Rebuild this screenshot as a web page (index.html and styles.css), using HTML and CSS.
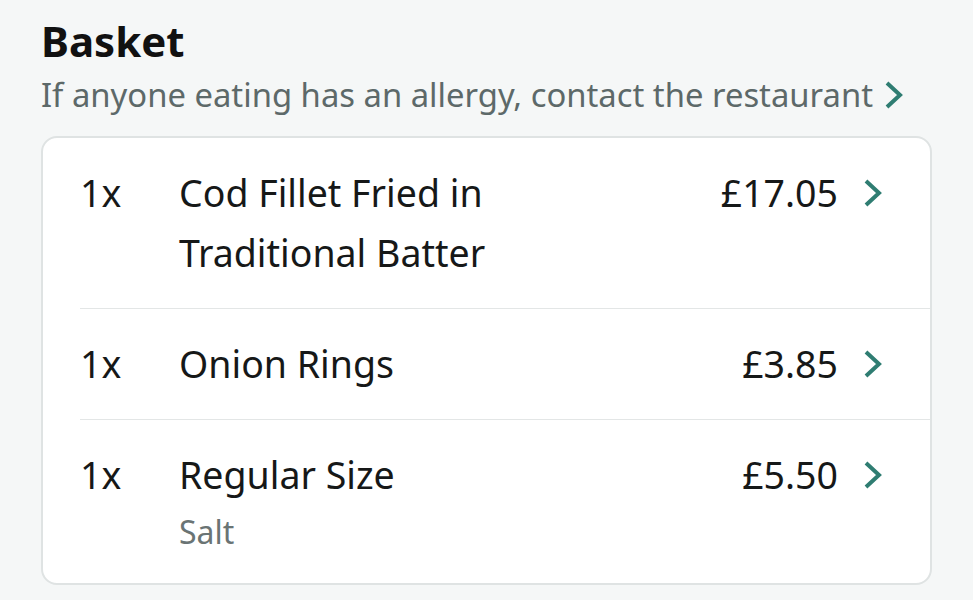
FILE: index.html
```html
<!DOCTYPE html>
<html lang="en">

<head>
    <meta charset="UTF-8" />
    <meta name="viewport" content="width=device-width, initial-scale=1" />
    <title>Basket</title>
    <link rel="stylesheet" href="styles.css">
</head>

<body>

    <div class="basket">
        <h1>Basket</h1>
        <a class="allergy" href="#">If anyone eating has an allergy, contact the restaurant
            <svg class="chev" viewBox="0 0 22 28"><path d="M4 2 L17 14 L4 26" /></svg>
        </a>

        <div class="card">
            <div class="item">
                <span class="qty">1x</span>
                <div class="name">Cod Fillet Fried in Traditional Batter</div>
                <span class="price">£17.05</span>
                <svg class="chev" viewBox="0 0 22 28"><path d="M4 2 L17 14 L4 26" /></svg>
            </div>
            <div class="item">
                <span class="qty">1x</span>
                <div class="name">Onion Rings</div>
                <span class="price">£3.85</span>
                <svg class="chev" viewBox="0 0 22 28"><path d="M4 2 L17 14 L4 26" /></svg>
            </div>
            <div class="item">
                <span class="qty">1x</span>
                <div class="name">Regular Size
                    <div class="extra">Salt</div>
                </div>
                <span class="price">£5.50</span>
                <svg class="chev" viewBox="0 0 22 28"><path d="M4 2 L17 14 L4 26" /></svg>
            </div>
        </div>
    </div>

</body>

</html>
```

FILE: styles.css
```css
body {
    font-family: "Noto Sans", sans-serif;
    background: #f5f7f7;
    margin: 0;
    padding: 0;
    color: #161818;
}

.basket {
    padding: 12px 41px 0 41px;
}

h1 {
    font-size: 42px;
    font-weight: 700;
    margin: 0;
    line-height: 58px;
    color: #111;
}

.allergy {
    display: flex;
    align-items: center;
    gap: 10px;
    font-size: 32.8px;
    line-height: 50px;
    color: #5d6969;
    text-decoration: none;
}

.chev {
    width: 22px;
    height: 28px;
    fill: none;
    stroke: #2f7d72;
    stroke-width: 4;
}

.card {
    margin-top: 16px;
    background: #fff;
    border: 2px solid #dfe3e3;
    border-radius: 16px;
    padding-left: 37px;
}

.item {
    display: flex;
    align-items: flex-start;
    padding: 25px 46px 25px 0;
    font-size: 37.5px;
    line-height: 60px;
    border-bottom: 1px solid #e3e6e6;
}

.item:last-child {
    border-bottom: none;
}

.qty {
    width: 99px;
    flex-shrink: 0;
}

.name {
    flex: 1;
    padding-right: 180px;
}

.extra {
    font-size: 32px;
    line-height: 53px;
    color: #6a7474;
}

.price {
    margin-right: 24px;
}

.item .chev {
    margin-top: 16px;
}
```
